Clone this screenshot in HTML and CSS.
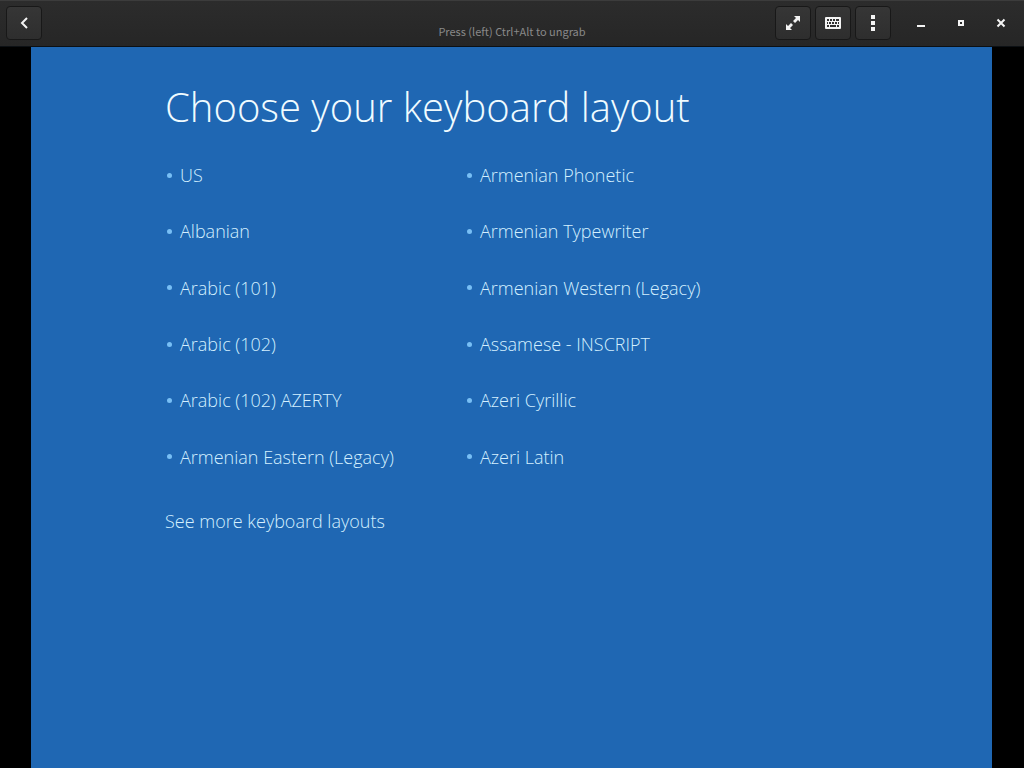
FILE: index.html
```
<!DOCTYPE html>
<html lang="en">
<head>
    <meta charset="UTF-8">
    <title>Choose your keyboard layout</title>
    <link rel="stylesheet" href="styles.css">
</head>
<body>
    <header class="titlebar">
        <div class="side">
            <button type="button" class="tool" aria-label="Back">
                <svg width="16" height="16" viewBox="0 0 16 16"><path d="M11 3L6 8l5 5" fill="none" stroke="currentColor" stroke-width="2"/></svg>
            </button>
        </div>

        <p class="subtitle">Press (left) Ctrl+Alt to ungrab</p>

        <div class="side side-end">
            <button type="button" class="tool" aria-label="Fullscreen">
                <svg width="16" height="16" viewBox="0 0 16 16"><path d="M9 1h6v6l-2-2-3 3-2-2 3-3zM1 9l2 2 3-3 2 2-3 3 2 2H1z" fill="currentColor"/></svg>
            </button>
            <button type="button" class="tool" aria-label="Keyboard">
                <svg width="16" height="16" viewBox="0 0 16 16"><path fill="currentColor" fill-rule="evenodd" d="M1 2h14a1 1 0 0 1 1 1v10a1 1 0 0 1-1 1H1a1 1 0 0 1-1-1V3a1 1 0 0 1 1-1zM2 4v2h2V4zM5 4v2h2V4zM8 4v2h2V4zM11 4v2h3V4zM2 7v2h1V7zM4 7v2h2V7zM7 7v2h2V7zM10 7v2h2V7zM13 7v2h1V7zM2 10v2h2v-2zM5 10v2h6v-2zM12 10v2h2v-2z"/></svg>
            </button>
            <button type="button" class="tool" aria-label="Menu">
                <svg width="16" height="16" viewBox="0 0 16 16"><path d="M6 0h4v4H6zM6 6h4v4H6zM6 12h4v4H6z" fill="currentColor"/></svg>
            </button>
            <div class="window-controls">
                <button type="button" aria-label="Minimize">
                    <svg width="16" height="16" viewBox="0 0 16 16"><path d="M4 10h8v2H4z" fill="currentColor"/></svg>
                </button>
                <button type="button" aria-label="Maximize">
                    <svg width="16" height="16" viewBox="0 0 16 16"><path d="M6 6h4v4H6z" fill="none" stroke="currentColor" stroke-width="2"/></svg>
                </button>
                <button type="button" aria-label="Close">
                    <svg width="16" height="16" viewBox="0 0 16 16"><path d="M4.5 4.5l7 7M11.5 4.5l-7 7" fill="none" stroke="currentColor" stroke-width="2"/></svg>
                </button>
            </div>
        </div>
    </header>

    <main class="screen">
        <h1>Choose your keyboard layout</h1>

        <div class="layouts">
            <ul>
                <li><a href="#">US</a></li>
                <li><a href="#">Albanian</a></li>
                <li><a href="#">Arabic (101)</a></li>
                <li><a href="#">Arabic (102)</a></li>
                <li><a href="#">Arabic (102) AZERTY</a></li>
                <li><a href="#">Armenian Eastern (Legacy)</a></li>
            </ul>
            <ul>
                <li><a href="#">Armenian Phonetic</a></li>
                <li><a href="#">Armenian Typewriter</a></li>
                <li><a href="#">Armenian Western (Legacy)</a></li>
                <li><a href="#">Assamese - INSCRIPT</a></li>
                <li><a href="#">Azeri Cyrillic</a></li>
                <li><a href="#">Azeri Latin</a></li>
            </ul>
        </div>

        <a class="more" href="#">See more keyboard layouts</a>
    </main>
</body>
</html>
```
FILE: styles.css
```
* {
    box-sizing: border-box;
}

body {
    display: flex;
    flex-direction: column;
    min-height: 100vh;
    margin: 0;
    background-color: #000;
    font-family: "Open Sans", "Noto Sans", sans-serif;
}

/* Title bar */
.titlebar {
    display: grid;
    grid-template-columns: 1fr auto 1fr;
    align-items: center;
    height: 47px;
    padding: 0 6px 2px;
    background: linear-gradient(#2c2c2c, #262626);
    border-top: 1px solid #3c3c3c;
    border-bottom: 1px solid #0c1014;
    color: #f4f4f4;
}

.side {
    display: flex;
    align-items: center;
    gap: 4px;
}

.side-end {
    justify-content: flex-end;
}

.titlebar button {
    display: flex;
    align-items: center;
    justify-content: center;
    padding: 0;
    border: none;
    background: none;
    color: inherit;
}

.titlebar .tool {
    width: 36px;
    height: 34px;
    border: 1px solid #181818;
    border-radius: 4px;
    background: linear-gradient(#363636, #2e2e2e);
}

.subtitle {
    margin: 16px 0 0;
    font-family: "Noto Sans CJK SC", "Noto Sans", sans-serif;
    font-size: 11px;
    line-height: 16px;
    color: #898989;
}

.window-controls {
    display: flex;
    gap: 16px;
    margin-left: 14px;
    padding-right: 5px;
}

.window-controls button {
    width: 24px;
    height: 24px;
}

/* Guest screen */
.screen {
    flex: 1;
    margin: 0 32px 0 31px;
    padding: 32px 134px;
    background-color: #1f67b3;
    font-weight: 300;
}

h1 {
    margin: 0;
    font-size: 40px;
    font-weight: 300;
    line-height: 56px;
    color: #f0fbff;
}

.screen a {
    color: #d4f0ff;
    font-size: 18px;
    line-height: 28px;
    text-decoration: none;
}

.layouts {
    display: grid;
    grid-template-columns: 300px 1fr;
    margin-top: 12px;
}

.layouts ul {
    display: grid;
    grid-template-rows: repeat(6, 1fr);
    align-items: center;
    min-height: 338px;
    margin: 0;
    padding: 0;
    list-style: none;
}

.layouts li {
    display: flex;
    align-items: center;
    gap: 8px;
}

.layouts li::before {
    content: "";
    width: 5px;
    height: 5px;
    margin-left: 2px;
    border-radius: 50%;
    background-color: #78bff5;
}

.more {
    display: inline-block;
    margin-top: 22px;
}
```
